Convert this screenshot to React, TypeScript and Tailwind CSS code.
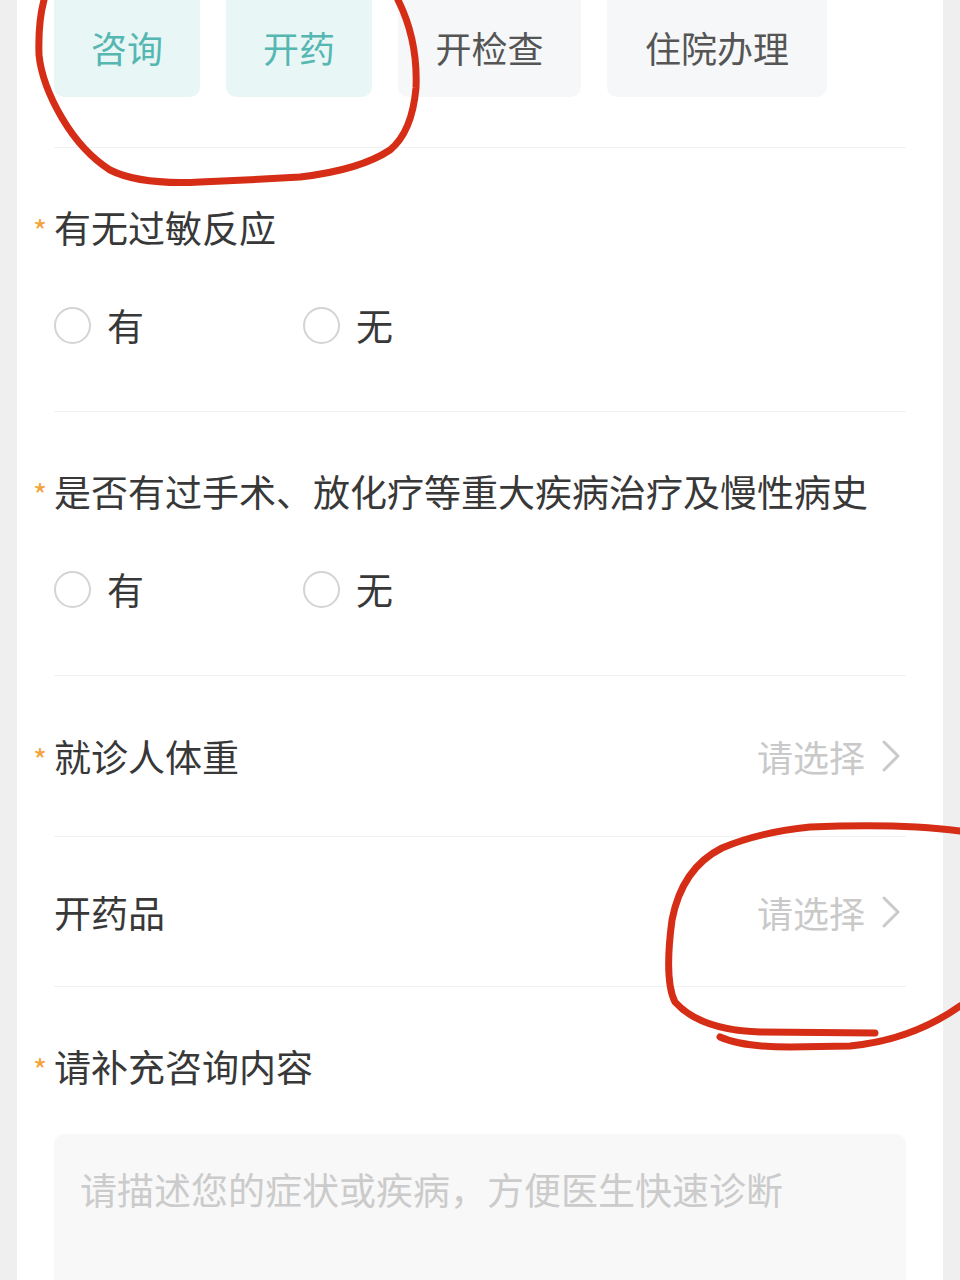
const font = { fontFamily: '"Noto Sans CJK SC", "Noto Sans", sans-serif' };

function Star() {
  return (
    <span className="absolute -left-[21px] top-[14px] text-[30px] leading-none text-[#f2a33a]">
      *
    </span>
  );
}

function Label({ text, required = true }: { text: string; required?: boolean }) {
  return (
    <div className="relative h-[52px] text-[37px] leading-[52px] text-[#383838]">
      {required && <Star />}
      {text}
    </div>
  );
}

function Radio({ label }: { label: string }) {
  return (
    <div className="flex w-[249px] items-center gap-[16px]">
      <span className="h-[37px] w-[37px] rounded-full border-2 border-[#d4d4d4]" />
      <span className="text-[37px] leading-[52px] text-[#383838]">{label}</span>
    </div>
  );
}

function RadioSection({ title }: { title: string }) {
  return (
    <div className="flex h-[263px] flex-col pt-[53px]">
      <Label text={title} />
      <div className="mt-[46px] flex h-[52px] items-center">
        <Radio label="有" />
        <Radio label="无" />
      </div>
    </div>
  );
}

function Chevron() {
  return (
    <svg width="20" height="32" viewBox="0 0 20 32" fill="none">
      <path d="M3 2 L17 16 L3 30" stroke="#cacaca" strokeWidth="3" strokeLinecap="round" strokeLinejoin="round" />
    </svg>
  );
}

function SelectRow({ title, required, h }: { title: string; required: boolean; h: string }) {
  return (
    <div className={`flex items-center justify-between ${h}`}>
      <Label text={title} required={required} />
      <div className="flex items-center gap-[16px] pr-[5px]">
        <span className="text-[36px] leading-[52px] text-[#c9c9c9]">请选择</span>
        <Chevron />
      </div>
    </div>
  );
}

function Divider() {
  return <div className="h-px bg-[#f1f1f1]" />;
}

const tabs = [
  { name: "咨询", active: true, w: "w-[146px]" },
  { name: "开药", active: true, w: "w-[146px]" },
  { name: "开检查", active: false, w: "w-[183px]" },
  { name: "住院办理", active: false, w: "w-[220px]" },
];

export default function App() {
  return (
    <div className="relative h-[1280px] overflow-hidden bg-[#efefef] px-[17px]" style={font}>
      <div className="h-full bg-white px-[37px]">
        <div className="flex gap-[26px] pb-[50px]">
          {tabs.map((t) => (
            <div
              key={t.name}
              className={`flex h-[97px] items-center justify-center rounded-b-[10px] text-[36px] ${t.w} ${
                t.active ? "bg-[#e9f6f6] text-[#55b7b2]" : "bg-[#f6f7f9] text-[#555]"
              }`}
            >
              <span className="-mt-[4px]">{t.name}</span>
            </div>
          ))}
        </div>
        <Divider />
        <RadioSection title="有无过敏反应" />
        <Divider />
        <RadioSection title="是否有过手术、放化疗等重大疾病治疗及慢性病史" />
        <Divider />
        <SelectRow title="就诊人体重" required h="h-[160px]" />
        <Divider />
        <SelectRow title="开药品" required={false} h="h-[149px]" />
        <Divider />
        <div className="pt-[53px]">
          <Label text="请补充咨询内容" />
          <div className="mt-[42px] h-[260px] rounded-[10px] bg-[#f8f8f8] px-[26px] pt-[29px]">
            <span className="text-[37px] leading-[52px] text-[#cbcbcb]">
              请描述您的症状或疾病，方便医生快速诊断
            </span>
          </div>
        </div>
      </div>

      {/* red hand-drawn annotations */}
      <svg
        className="pointer-events-none absolute left-0 top-0"
        width="960"
        height="1280"
        viewBox="0 0 960 1280"
        fill="none"
        stroke="#d62d16"
        strokeWidth="7"
        strokeLinecap="round"
        strokeLinejoin="round"
      >
        <path d="M398 0 Q418 40 416 88 Q412 132 390 150 Q360 170 300 177 Q250 180 200 182 Q140 185 110 170 Q82 152 62 118 Q42 84 39 55 Q38 22 44 0" />
        <path d="M960 831 Q900 823 810 827 Q760 832 722 848 Q682 868 672 920 Q664 980 675 1002 Q700 1030 760 1032 L875 1033" />
        <path d="M720 1037 Q742 1047 790 1047 L850 1046 Q912 1040 960 1006" />
      </svg>
    </div>
  );
}
